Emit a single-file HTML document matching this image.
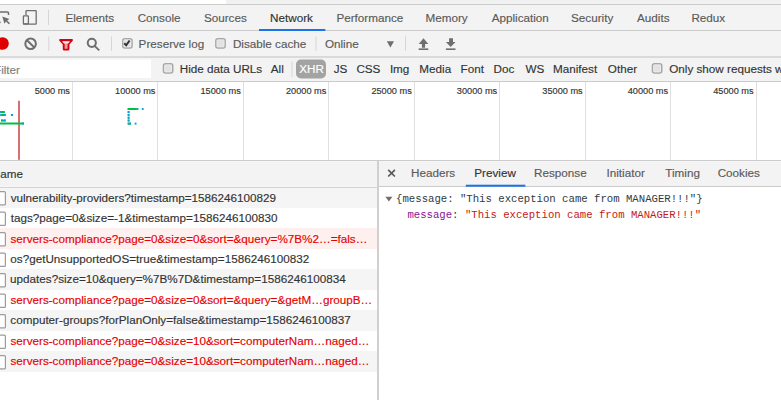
<!DOCTYPE html><html><head><meta charset="utf-8"><style>html,body{margin:0;padding:0;width:781px;height:400px;overflow:hidden;background:#fff;position:relative} div{-webkit-text-stroke:0.15px currentColor}</style></head><body><div style="position:absolute;left:0px;top:0px;width:781px;height:4px;background:#ffffff;"></div>
<div style="position:absolute;left:226px;top:0px;width:555px;height:4px;background:#f1f1f1;"></div>
<div style="position:absolute;left:0px;top:4px;width:781px;height:1px;background:#cbcbcb;"></div>
<div style="position:absolute;left:0px;top:5px;width:781px;height:25px;background:#f3f3f3;"></div>
<div style="position:absolute;left:0px;top:30px;width:781px;height:1px;background:#cbcbcb;"></div>
<div style="position:absolute;left:0px;top:31px;width:781px;height:25px;background:#f3f3f3;"></div>
<div style="position:absolute;left:0px;top:56px;width:781px;height:2px;background:#dadada;"></div>
<div style="position:absolute;left:0px;top:58px;width:781px;height:23px;background:#f3f3f3;"></div>
<div style="position:absolute;left:0px;top:59px;width:151px;height:1px;background:#f9f9f9;"></div>
<div style="position:absolute;left:0px;top:60px;width:151px;height:18px;background:#ffffff;"></div>
<div style="position:absolute;left:0px;top:81px;width:781px;height:1px;background:#cbcbcb;"></div>
<div style="position:absolute;left:0px;top:82px;width:781px;height:78px;background:#ffffff;"></div>
<div style="position:absolute;left:71.9px;top:82px;width:1px;height:78px;background:#e0e0e0;"></div>
<div style="position:absolute;left:157.4px;top:82px;width:1px;height:78px;background:#e0e0e0;"></div>
<div style="position:absolute;left:242.8px;top:82px;width:1px;height:78px;background:#e0e0e0;"></div>
<div style="position:absolute;left:328.2px;top:82px;width:1px;height:78px;background:#e0e0e0;"></div>
<div style="position:absolute;left:413.7px;top:82px;width:1px;height:78px;background:#e0e0e0;"></div>
<div style="position:absolute;left:499.1px;top:82px;width:1px;height:78px;background:#e0e0e0;"></div>
<div style="position:absolute;left:584.6px;top:82px;width:1px;height:78px;background:#e0e0e0;"></div>
<div style="position:absolute;left:670.0px;top:82px;width:1px;height:78px;background:#e0e0e0;"></div>
<div style="position:absolute;left:755.5px;top:82px;width:1px;height:78px;background:#e0e0e0;"></div>
<div style="position:absolute;left:0px;top:160px;width:781px;height:1px;background:#cbcbcb;"></div>
<div style="position:absolute;left:0px;top:161px;width:781px;height:1px;background:#f6f6f6;"></div>
<div style="position:absolute;left:0px;top:162px;width:377px;height:25px;background:#f3f3f3;"></div>
<div style="position:absolute;left:0px;top:186px;width:377px;height:1px;background:#f6f6f6;"></div>
<div style="position:absolute;left:0px;top:187px;width:377px;height:1px;background:#d4d4d4;"></div>
<div style="position:absolute;left:379px;top:162px;width:402px;height:24px;background:#f3f3f3;"></div>
<div style="position:absolute;left:379px;top:186px;width:402px;height:1px;background:#cbcbcb;"></div>
<div style="position:absolute;left:379px;top:187px;width:402px;height:213px;background:#ffffff;"></div>
<div style="position:absolute;left:0px;top:188px;width:377px;height:212px;background:#ffffff;"></div>
<div style="position:absolute;left:377px;top:161px;width:2px;height:239px;background:#d0d0d0;"></div>
<div style="position:absolute;left:0px;top:187.0px;width:377px;height:20.5px;background:#f5f5f5;"></div>
<div style="position:absolute;left:0px;top:207.5px;width:377px;height:20.5px;background:#ffffff;"></div>
<div style="position:absolute;left:0px;top:228.0px;width:377px;height:20.5px;background:#fff0f0;"></div>
<div style="position:absolute;left:0px;top:248.5px;width:377px;height:20.5px;background:#ffffff;"></div>
<div style="position:absolute;left:0px;top:269.0px;width:377px;height:20.5px;background:#f5f5f5;"></div>
<div style="position:absolute;left:0px;top:289.5px;width:377px;height:20.5px;background:#ffffff;"></div>
<div style="position:absolute;left:0px;top:310.0px;width:377px;height:20.5px;background:#f5f5f5;"></div>
<div style="position:absolute;left:0px;top:330.5px;width:377px;height:20.5px;background:#ffffff;"></div>
<div style="position:absolute;left:0px;top:351.0px;width:377px;height:20.5px;background:#f5f5f5;"></div>
<div style="position:absolute;left:0px;top:187px;width:377px;height:1px;background:#d4d4d4;"></div>
<svg style="position:absolute;left:0;top:0" width="781" height="400" viewBox="0 0 781 400"><path d="M-3 12 H7.5 Q8.5 12 8.5 13 V15" fill="none" stroke="#6e6e6e" stroke-width="1.5"/><rect x="-1" y="21.6" width="1.6" height="1.6" fill="#6e6e6e"/><path d="M2.3 16.6 L9.4 18.9 L7.2 20.4 L10 23.2 L8.8 24.3 L6 21.5 L4.4 23.8 Z" fill="#6e6e6e"/><path d="M26 15.2 V11.3 Q26 10.7 26.6 10.7 H35.6 Q36.2 10.7 36.2 11.3 V23.6 Q36.2 24.2 35.6 24.2 H28.6" fill="none" stroke="#6e6e6e" stroke-width="1.3"/><rect x="23.4" y="15.8" width="5" height="8.3" rx="0.6" fill="none" stroke="#6e6e6e" stroke-width="1.3"/><rect x="23.4" y="23.2" width="5" height="1.3" fill="#6e6e6e"/><rect x="48" y="10" width="1" height="15" fill="#d6d6d6"/><circle cx="2.6" cy="43.5" r="6.2" fill="#e00000"/><circle cx="30.6" cy="43.8" r="5.3" fill="none" stroke="#6e6e6e" stroke-width="2"/><path d="M27 40.2 L34.2 47.4" stroke="#6e6e6e" stroke-width="2"/><rect x="48.3" y="36.5" width="1" height="14.5" fill="#d6d6d6"/><path d="M60.1 40 H72 L68.5 44 V49 Q68.5 49.6 67.9 49.6 H64.3 Q63.7 49.6 63.7 49 V44 Z" fill="#ec9a9a" stroke="#d9000f" stroke-width="1.9" stroke-linejoin="round"/><path d="M62 41.5 H70.1 L68.1 43.5 H64 Z" fill="#fbeaea"/><circle cx="91.8" cy="42.8" r="4.1" fill="none" stroke="#6e6e6e" stroke-width="2"/><path d="M94.6 45.8 L99.2 50.4" stroke="#6e6e6e" stroke-width="1.9"/><rect x="111" y="36.5" width="1" height="14.5" fill="#d6d6d6"/><rect x="315.5" y="36.5" width="1" height="14.5" fill="#d6d6d6"/><path d="M386.8 41.2 H394 L390.4 47.4 Z" fill="#6e6e6e"/><rect x="405" y="36.5" width="1" height="14.5" fill="#d6d6d6"/><path d="M423.5 38.2 L428.3 43.9 H425.1 V47.8 H421.9 V43.9 H418.7 Z" fill="#6e6e6e"/><rect x="418.7" y="48.4" width="9.6" height="1.6" fill="#6e6e6e"/><path d="M449.1 38.2 H453 V42 H455.5 L450.7 47.1 L445.9 42 H449.1 Z" fill="#6e6e6e"/><rect x="445.9" y="48.4" width="9.6" height="1.6" fill="#6e6e6e"/><rect x="291.5" y="61.5" width="1" height="15.5" fill="#d6d6d6"/><rect x="296" y="59.5" width="30" height="19" rx="5" fill="#a3a3a3"/><rect x="18" y="100.8" width="2" height="59" fill="#d77070"/><rect x="0" y="111" width="4.9" height="2" fill="#00c040"/><rect x="0" y="111" width="1.5" height="2" fill="#10a0e0"/><rect x="0.4" y="114" width="5.5" height="2" fill="#00c040"/><rect x="0.4" y="114" width="1.5" height="2" fill="#10a0e0"/><rect x="3.5" y="114" width="2.4" height="2" fill="#10a0e0"/><rect x="10.9" y="114" width="2.2" height="2" fill="#10a0e0"/><rect x="1.1" y="119.5" width="4.5" height="2" fill="#00c040"/><rect x="1.1" y="119.5" width="1.5" height="2" fill="#10a0e0"/><rect x="4" y="119.5" width="1.6" height="2" fill="#10a0e0"/><rect x="0" y="122.5" width="24" height="2" fill="#00c040"/><rect x="22" y="122.5" width="2" height="2" fill="#10a0e0"/><rect x="127.5" y="108" width="9.4" height="2" fill="#00c040"/><rect x="136.9" y="108" width="1.6" height="2" fill="#10a0e0"/><rect x="141.8" y="108" width="1.8" height="2" fill="#10a0e0"/><rect x="127.5" y="111" width="2" height="2" fill="#00c040"/><rect x="128" y="111" width="1.5" height="2" fill="#10a0e0"/><rect x="127.5" y="113.9" width="2" height="2" fill="#00c040"/><rect x="128" y="113.9" width="1.5" height="2" fill="#10a0e0"/><rect x="127.5" y="116.7" width="2" height="2" fill="#00c040"/><rect x="128" y="116.7" width="1.5" height="2" fill="#10a0e0"/><rect x="127.5" y="119.5" width="2" height="2" fill="#00c040"/><rect x="128" y="119.5" width="1.5" height="2" fill="#10a0e0"/><rect x="127.5" y="122.6" width="3.5" height="2" fill="#00c040"/><rect x="128.5" y="122.6" width="2.5" height="2" fill="#10a0e0"/><rect x="134.6" y="122.6" width="1.9" height="2" fill="#10a0e0"/><path d="M388.2 169.8 L394.9 176.5 M394.9 169.8 L388.2 176.5" stroke="#5a5a5a" stroke-width="1.7"/><path d="M385.4 196.8 H392.4 L388.9 201.4 Z" fill="#6e6e6e"/><rect x="259" y="29" width="66.3" height="2" fill="#1a73e8"/><rect x="465.8" y="184.7" width="59.6" height="2" fill="#1a73e8"/><rect x="122.75" y="38.75" width="9.3" height="9.3" rx="2" fill="#e2e2e2" stroke="#a8a8a8" stroke-width="1.5"/><rect x="124" y="40" width="6.8" height="6.8" rx="0.5" fill="none" stroke="#ededed" stroke-width="0.8"/><path d="M124.2 43.3 L126.2 45.3 L129.6 40.5" fill="none" stroke="#333" stroke-width="2"/><rect x="215.85" y="38.75" width="9.3" height="9.3" rx="2" fill="#e2e2e2" stroke="#a8a8a8" stroke-width="1.5"/><rect x="217.1" y="40" width="6.8" height="6.8" rx="0.5" fill="none" stroke="#ededed" stroke-width="0.8"/><rect x="163.45" y="63.75" width="9.3" height="9.3" rx="2" fill="#e2e2e2" stroke="#a8a8a8" stroke-width="1.5"/><rect x="164.7" y="65" width="6.8" height="6.8" rx="0.5" fill="none" stroke="#ededed" stroke-width="0.8"/><rect x="652.45" y="63.75" width="9.3" height="9.3" rx="2" fill="#e2e2e2" stroke="#a8a8a8" stroke-width="1.5"/><rect x="653.7" y="65" width="6.8" height="6.8" rx="0.5" fill="none" stroke="#ededed" stroke-width="0.8"/><rect x="-3.4" y="191.7" width="8.8" height="13.2" rx="1" fill="#ffffff" stroke="#9c9c9c" stroke-width="1.2"/><rect x="-3.4" y="212.2" width="8.8" height="13.2" rx="1" fill="#ffffff" stroke="#9c9c9c" stroke-width="1.2"/><rect x="-3.4" y="232.7" width="8.8" height="13.2" rx="1" fill="#ffffff" stroke="#9c9c9c" stroke-width="1.2"/><rect x="-3.4" y="253.2" width="8.8" height="13.2" rx="1" fill="#ffffff" stroke="#9c9c9c" stroke-width="1.2"/><rect x="-3.4" y="273.70000000000005" width="8.8" height="13.2" rx="1" fill="#ffffff" stroke="#9c9c9c" stroke-width="1.2"/><rect x="-3.4" y="294.20000000000005" width="8.8" height="13.2" rx="1" fill="#ffffff" stroke="#9c9c9c" stroke-width="1.2"/><rect x="-3.4" y="314.70000000000005" width="8.8" height="13.2" rx="1" fill="#ffffff" stroke="#9c9c9c" stroke-width="1.2"/><rect x="-3.4" y="335.20000000000005" width="8.8" height="13.2" rx="1" fill="#ffffff" stroke="#9c9c9c" stroke-width="1.2"/><rect x="-3.4" y="355.70000000000005" width="8.8" height="13.2" rx="1" fill="#ffffff" stroke="#9c9c9c" stroke-width="1.2"/></svg>
<div style="position:absolute;left:65.4px;top:11.9px;font-family:'Liberation Sans';font-size:11.7px;line-height:11.7px;color:#5a5a5a;white-space:pre;">Elements</div>
<div style="position:absolute;left:137.68px;top:11.9px;font-family:'Liberation Sans';font-size:11.7px;line-height:11.7px;color:#5a5a5a;white-space:pre;">Console</div>
<div style="position:absolute;left:203.88px;top:11.9px;font-family:'Liberation Sans';font-size:11.7px;line-height:11.7px;color:#5a5a5a;white-space:pre;">Sources</div>
<div style="position:absolute;left:270.0px;top:11.9px;font-family:'Liberation Sans';font-size:11.7px;line-height:11.7px;color:#333;white-space:pre;">Network</div>
<div style="position:absolute;left:336.4px;top:11.9px;font-family:'Liberation Sans';font-size:11.7px;line-height:11.7px;color:#5a5a5a;white-space:pre;">Performance</div>
<div style="position:absolute;left:425.5px;top:11.9px;font-family:'Liberation Sans';font-size:11.7px;line-height:11.7px;color:#5a5a5a;white-space:pre;">Memory</div>
<div style="position:absolute;left:491.7px;top:11.9px;font-family:'Liberation Sans';font-size:11.7px;line-height:11.7px;color:#5a5a5a;white-space:pre;">Application</div>
<div style="position:absolute;left:571.08px;top:11.9px;font-family:'Liberation Sans';font-size:11.7px;line-height:11.7px;color:#5a5a5a;white-space:pre;">Security</div>
<div style="position:absolute;left:637.0px;top:11.9px;font-family:'Liberation Sans';font-size:11.7px;line-height:11.7px;color:#5a5a5a;white-space:pre;">Audits</div>
<div style="position:absolute;left:691.4px;top:11.9px;font-family:'Liberation Sans';font-size:11.7px;line-height:11.7px;color:#5a5a5a;white-space:pre;">Redux</div>
<div style="position:absolute;left:138.6px;top:37.8px;font-family:'Liberation Sans';font-size:11.7px;line-height:11.7px;color:#5a5a5a;white-space:pre;">Preserve log</div>
<div style="position:absolute;left:232.9px;top:37.8px;font-family:'Liberation Sans';font-size:11.7px;line-height:11.7px;color:#5a5a5a;white-space:pre;">Disable cache</div>
<div style="position:absolute;left:324.9px;top:37.8px;font-family:'Liberation Sans';font-size:11.7px;line-height:11.7px;color:#5a5a5a;white-space:pre;">Online</div>
<div style="position:absolute;left:-6.0px;top:63.5px;font-family:'Liberation Sans';font-size:11.7px;line-height:11.7px;color:#808080;white-space:pre;">Filter</div>
<div style="position:absolute;left:179.7px;top:62.6px;font-family:'Liberation Sans';font-size:11.7px;line-height:11.7px;color:#333;white-space:pre;">Hide data URLs</div>
<div style="position:absolute;left:270.8px;top:62.6px;font-family:'Liberation Sans';font-size:11.7px;line-height:11.7px;color:#333;white-space:pre;">All</div>
<div style="position:absolute;left:333.75px;top:62.6px;font-family:'Liberation Sans';font-size:11.7px;line-height:11.7px;color:#333;white-space:pre;">JS</div>
<div style="position:absolute;left:356.38px;top:62.6px;font-family:'Liberation Sans';font-size:11.7px;line-height:11.7px;color:#333;white-space:pre;">CSS</div>
<div style="position:absolute;left:389.88px;top:62.6px;font-family:'Liberation Sans';font-size:11.7px;line-height:11.7px;color:#333;white-space:pre;">Img</div>
<div style="position:absolute;left:419.3px;top:62.6px;font-family:'Liberation Sans';font-size:11.7px;line-height:11.7px;color:#333;white-space:pre;">Media</div>
<div style="position:absolute;left:460.5px;top:62.6px;font-family:'Liberation Sans';font-size:11.7px;line-height:11.7px;color:#333;white-space:pre;">Font</div>
<div style="position:absolute;left:493.5px;top:62.6px;font-family:'Liberation Sans';font-size:11.7px;line-height:11.7px;color:#333;white-space:pre;">Doc</div>
<div style="position:absolute;left:525.48px;top:62.6px;font-family:'Liberation Sans';font-size:11.7px;line-height:11.7px;color:#333;white-space:pre;">WS</div>
<div style="position:absolute;left:553.0px;top:62.6px;font-family:'Liberation Sans';font-size:11.7px;line-height:11.7px;color:#333;white-space:pre;">Manifest</div>
<div style="position:absolute;left:607.8px;top:62.6px;font-family:'Liberation Sans';font-size:11.7px;line-height:11.7px;color:#333;white-space:pre;">Other</div>
<div style="position:absolute;left:669.2px;top:62.6px;font-family:'Liberation Sans';font-size:11.7px;line-height:11.7px;color:#333;white-space:pre;">Only show requests with blocked cookies</div>
<div style="position:absolute;left:299.15px;top:62.6px;font-family:'Liberation Sans';font-size:11.7px;line-height:11.7px;color:#ffffff;white-space:pre;">XHR</div>
<div style="position:absolute;left:34.73px;top:87.3px;font-family:'Liberation Sans';font-size:9.2px;line-height:9.2px;color:#333;white-space:pre;">5000 ms</div>
<div style="position:absolute;left:115.05px;top:87.3px;font-family:'Liberation Sans';font-size:9.2px;line-height:9.2px;color:#333;white-space:pre;">10000 ms</div>
<div style="position:absolute;left:200.5px;top:87.3px;font-family:'Liberation Sans';font-size:9.2px;line-height:9.2px;color:#333;white-space:pre;">15000 ms</div>
<div style="position:absolute;left:285.95px;top:87.3px;font-family:'Liberation Sans';font-size:9.2px;line-height:9.2px;color:#333;white-space:pre;">20000 ms</div>
<div style="position:absolute;left:371.4px;top:87.3px;font-family:'Liberation Sans';font-size:9.2px;line-height:9.2px;color:#333;white-space:pre;">25000 ms</div>
<div style="position:absolute;left:456.85px;top:87.3px;font-family:'Liberation Sans';font-size:9.2px;line-height:9.2px;color:#333;white-space:pre;">30000 ms</div>
<div style="position:absolute;left:542.3px;top:87.3px;font-family:'Liberation Sans';font-size:9.2px;line-height:9.2px;color:#333;white-space:pre;">35000 ms</div>
<div style="position:absolute;left:627.75px;top:87.3px;font-family:'Liberation Sans';font-size:9.2px;line-height:9.2px;color:#333;white-space:pre;">40000 ms</div>
<div style="position:absolute;left:713.2px;top:87.3px;font-family:'Liberation Sans';font-size:9.2px;line-height:9.2px;color:#333;white-space:pre;">45000 ms</div>
<div style="position:absolute;left:-8.1px;top:168px;font-family:'Liberation Sans';font-size:11.7px;line-height:11.7px;color:#333;white-space:pre;">Name</div>
<div style="position:absolute;left:411.0px;top:167.4px;font-family:'Liberation Sans';font-size:11.7px;line-height:11.7px;color:#5a5a5a;white-space:pre;">Headers</div>
<div style="position:absolute;left:474.3px;top:167.4px;font-family:'Liberation Sans';font-size:11.7px;line-height:11.7px;color:#333;white-space:pre;">Preview</div>
<div style="position:absolute;left:534.0px;top:167.4px;font-family:'Liberation Sans';font-size:11.7px;line-height:11.7px;color:#5a5a5a;white-space:pre;">Response</div>
<div style="position:absolute;left:606.48px;top:167.4px;font-family:'Liberation Sans';font-size:11.7px;line-height:11.7px;color:#5a5a5a;white-space:pre;">Initiator</div>
<div style="position:absolute;left:665.25px;top:167.4px;font-family:'Liberation Sans';font-size:11.7px;line-height:11.7px;color:#5a5a5a;white-space:pre;">Timing</div>
<div style="position:absolute;left:717.68px;top:167.4px;font-family:'Liberation Sans';font-size:11.7px;line-height:11.7px;color:#5a5a5a;white-space:pre;">Cookies</div>
<div style="position:absolute;left:10.68px;top:191.6px;font-family:'Liberation Sans';font-size:11.7px;line-height:11.7px;color:#333;white-space:pre;">vulnerability-providers?timestamp=1586246100829</div>
<div style="position:absolute;left:10.68px;top:212.04999999999998px;font-family:'Liberation Sans';font-size:11.7px;line-height:11.7px;color:#333;white-space:pre;">tags?page=0&amp;size=-1&amp;timestamp=1586246100830</div>
<div style="position:absolute;left:10.42px;top:232.5px;font-family:'Liberation Sans';font-size:11.7px;line-height:11.7px;color:#e60000;white-space:pre;">servers-compliance?page=0&amp;size=0&amp;sort=&amp;query=%7B%2…=fals…</div>
<div style="position:absolute;left:10.3px;top:252.95px;font-family:'Liberation Sans';font-size:11.7px;line-height:11.7px;color:#333;white-space:pre;">os?getUnsupportedOS=true&amp;timestamp=1586246100832</div>
<div style="position:absolute;left:10.05px;top:273.4px;font-family:'Liberation Sans';font-size:11.7px;line-height:11.7px;color:#333;white-space:pre;">updates?size=10&amp;query=%7B%7D&amp;timestamp=1586246100834</div>
<div style="position:absolute;left:10.42px;top:293.85px;font-family:'Liberation Sans';font-size:11.7px;line-height:11.7px;color:#e60000;white-space:pre;">servers-compliance?page=0&amp;size=0&amp;sort=&amp;query=&amp;getM…groupB…</div>
<div style="position:absolute;left:10.3px;top:314.29999999999995px;font-family:'Liberation Sans';font-size:11.7px;line-height:11.7px;color:#333;white-space:pre;">computer-groups?forPlanOnly=false&amp;timestamp=1586246100837</div>
<div style="position:absolute;left:10.42px;top:334.75px;font-family:'Liberation Sans';font-size:11.7px;line-height:11.7px;color:#e60000;white-space:pre;">servers-compliance?page=0&amp;size=10&amp;sort=computerNam…naged…</div>
<div style="position:absolute;left:10.42px;top:355.2px;font-family:'Liberation Sans';font-size:11.7px;line-height:11.7px;color:#e60000;white-space:pre;">servers-compliance?page=0&amp;size=10&amp;sort=computerNam…naged…</div>
<div style="position:absolute;left:396.1px;top:194.4px;font-family:'Liberation Mono';font-size:10.65px;line-height:10.65px;color:#303942;white-space:pre;-webkit-text-stroke:0">{message: "This exception came from MANAGER!!!"}</div>
<div style="position:absolute;left:407.4px;top:209.6px;font-family:'Liberation Mono';font-size:10.65px;line-height:10.65px;white-space:pre;-webkit-text-stroke:0"><span style="color:#881391">message</span><span style="color:#303942">: </span><span style="color:#c41a16">"This exception came from MANAGER!!!"</span></div></body></html>
